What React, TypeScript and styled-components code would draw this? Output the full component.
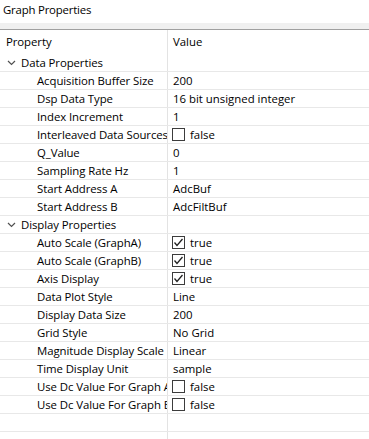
import styled, { createGlobalStyle } from "styled-components";

const GlobalStyle = createGlobalStyle`
  html, body {
    margin: 0;
    padding: 0;
    background: #ffffff;
    overflow: hidden;
  }
  body {
    font-family: "Segoe UI", "Open Sans", "Noto Sans", sans-serif;
    font-size: 11.4px;
    color: #000000;
  }
`;

const Panel = styled.div`
  width: 369px;
  height: 439px;
  overflow: hidden;
`;

const TitleBar = styled.div`
  height: 23px;
  padding-left: 3px;
  line-height: 19px;
  font-size: 11.4px;
  letter-spacing: -0.2px;
`;

const TabBand = styled.div`
  height: 6px;
  background: #f0f0f0;
  border-bottom: 1px solid #a0a0a0;
`;

const Row = styled.div<{ $header?: boolean }>`
  display: grid;
  grid-template-columns: 168px 1fr;
  height: ${(p) => (p.$header ? "24px" : "18px")};
  box-sizing: border-box;
  border-bottom: ${(p) => (p.$header ? "none" : "1px solid #e8e8e8")};
  line-height: ${(p) => (p.$header ? "24px" : "17px")};
`;

const NameCell = styled.div<{ $indent: number }>`
  box-sizing: border-box;
  border-right: 1px solid #e3e3e3;
  padding-left: ${(p) => p.$indent}px;
  letter-spacing: -0.08px;
  white-space: nowrap;
  overflow: hidden;
  display: flex;
  align-items: center;
`;

const ValueCell = styled.div`
  padding-left: 5px;
  white-space: nowrap;
  overflow: hidden;
  display: flex;
  align-items: center;
`;

const Chevron = styled.svg`
  width: 9px;
  height: 6px;
  margin-right: 5px;
  flex-shrink: 0;
`;

const Box = styled.span`
  width: 13px;
  height: 13px;
  box-sizing: border-box;
  border: 1px solid #3c3c3c;
  background: #ffffff;
  margin-left: -1px;
  margin-right: 5px;
  display: inline-flex;
  align-items: center;
  justify-content: center;
  flex-shrink: 0;
`;

type Prop = { name: string; value?: string; check?: boolean };

const dataProps: Prop[] = [
  { name: "Acquisition Buffer Size", value: "200" },
  { name: "Dsp Data Type", value: "16 bit unsigned integer" },
  { name: "Index Increment", value: "1" },
  { name: "Interleaved Data Sources", check: false },
  { name: "Q_Value", value: "0" },
  { name: "Sampling Rate Hz", value: "1" },
  { name: "Start Address A", value: "AdcBuf" },
  { name: "Start Address B", value: "AdcFiltBuf" },
];

const displayProps: Prop[] = [
  { name: "Auto Scale (GraphA)", check: true },
  { name: "Auto Scale (GraphB)", check: true },
  { name: "Axis Display", check: true },
  { name: "Data Plot Style", value: "Line" },
  { name: "Display Data Size", value: "200" },
  { name: "Grid Style", value: "No Grid" },
  { name: "Magnitude Display Scale", value: "Linear" },
  { name: "Time Display Unit", value: "sample" },
  { name: "Use Dc Value For Graph A", check: false },
  { name: "Use Dc Value For Graph B", check: false },
];

function CheckValue({ on }: { on: boolean }) {
  return (
    <>
      <Box>
        {on && (
          <svg width="11" height="11" viewBox="0 0 11 11">
            <polyline
              points="1.5,5.5 4,8.5 9.5,2"
              fill="none"
              stroke="#202020"
              strokeWidth="1.3"
            />
          </svg>
        )}
      </Box>
      {on ? "true" : "false"}
    </>
  );
}

function Group({ label, items }: { label: string; items: Prop[] }) {
  return (
    <>
      <Row>
        <NameCell $indent={7}>
          <Chevron viewBox="0 0 9 6">
            <polyline points="1,1 4.5,4.5 8,1" fill="none" stroke="#505050" strokeWidth="1.2" />
          </Chevron>
          {label}
        </NameCell>
        <ValueCell />
      </Row>
      {items.map((p) => (
        <Row key={p.name}>
          <NameCell $indent={37}>{p.name}</NameCell>
          <ValueCell>
            {p.check !== undefined ? <CheckValue on={p.check} /> : p.value}
          </ValueCell>
        </Row>
      ))}
    </>
  );
}

export default function App() {
  return (
    <Panel>
      <GlobalStyle />
      <TitleBar>Graph Properties</TitleBar>
      <TabBand />
      <Row $header>
        <NameCell $indent={6}>Property</NameCell>
        <ValueCell>Value</ValueCell>
      </Row>
      <Group label="Data Properties" items={dataProps} />
      <Group label="Display Properties" items={displayProps} />
      <Row>
        <NameCell $indent={37} />
        <ValueCell />
      </Row>
      <Row>
        <NameCell $indent={37} />
        <ValueCell />
      </Row>
    </Panel>
  );
}
